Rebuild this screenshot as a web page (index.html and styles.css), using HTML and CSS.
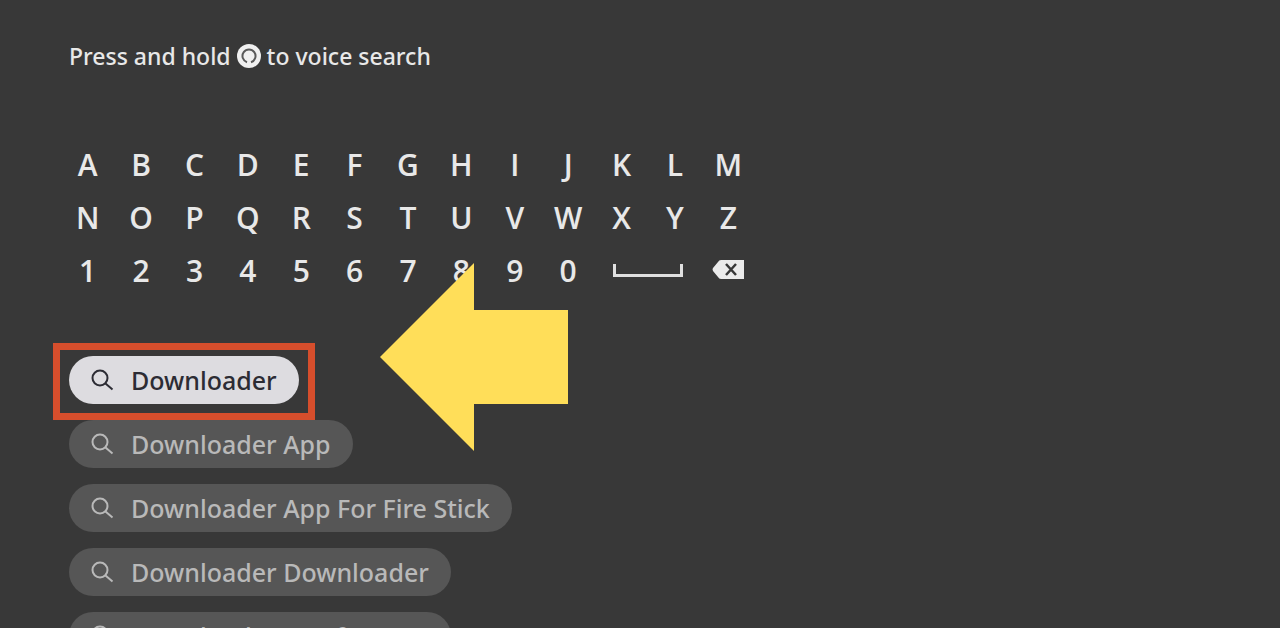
FILE: index.html
```html
<!DOCTYPE html>
<html lang="en">
  <head>
    <meta charset="UTF-8" />
    <meta name="viewport" content="width=device-width, initial-scale=1" />
    <title>Search</title>
    <link rel="stylesheet" href="styles.css">
  </head>
  <body>
    <svg class="sprite" aria-hidden="true">
      <symbol id="search" viewBox="0 0 24 24">
        <circle cx="9" cy="10" r="7.5" />
        <path d="M14.5 15.5L21.5 21.5" />
      </symbol>
    </svg>

    <main class="search">
      <p class="hint">
        Press and hold
        <svg class="mic" viewBox="0 0 24 24" role="img" aria-label="voice button">
          <circle class="mic-fill" cx="12" cy="12" r="12" />
          <path class="mic-ring" d="M10 18.2A6.500 6.500 0 1 1 14 18.200" />
        </svg>
        to voice search
      </p>

      <div class="keyboard">
        <button>A</button>
        <button>B</button>
        <button>C</button>
        <button>D</button>
        <button>E</button>
        <button>F</button>
        <button>G</button>
        <button>H</button>
        <button>I</button>
        <button>J</button>
        <button>K</button>
        <button>L</button>
        <button>M</button>
        <button>N</button>
        <button>O</button>
        <button>P</button>
        <button>Q</button>
        <button>R</button>
        <button>S</button>
        <button>T</button>
        <button>U</button>
        <button>V</button>
        <button>W</button>
        <button>X</button>
        <button>Y</button>
        <button>Z</button>
        <button>1</button>
        <button>2</button>
        <button>3</button>
        <button>4</button>
        <button>5</button>
        <button>6</button>
        <button>7</button>
        <button>8</button>
        <button>9</button>
        <button>0</button>
        <button class="space" aria-label="Space">
          <svg width="70" height="14" viewBox="0 0 70 14">
            <path d="M1.5 0v11.5h67V0" fill="none" stroke="#e0e0e0" stroke-width="3" />
          </svg>
        </button>
        <button aria-label="Backspace">
          <svg width="32" height="22" viewBox="0 0 32 22">
            <path d="M9 0H32V19H9Q7 19 6 17L1 11Q0 9 1 8L6 2Q7 0 9 0z" fill="#ebebeb" />
            <path d="M14 4l10 11M24 4L14 15" stroke="#383838" stroke-width="2.5" />
          </svg>
        </button>
      </div>

      <ul class="suggestions">
        <li>
          <button class="chip selected">
            <svg class="icon"><use href="#search" /></svg>Downloader
          </button>
        </li>
        <li>
          <button class="chip">
            <svg class="icon"><use href="#search" /></svg>Downloader App
          </button>
        </li>
        <li>
          <button class="chip">
            <svg class="icon"><use href="#search" /></svg>Downloader App For Fire Stick
          </button>
        </li>
        <li>
          <button class="chip">
            <svg class="icon"><use href="#search" /></svg>Downloader Downloader
          </button>
        </li>
        <li>
          <button class="chip">
            <svg class="icon"><use href="#search" /></svg>Downloader By Aftvnews
          </button>
        </li>
      </ul>
    </main>

    <svg class="arrow" viewBox="0 0 188 188" aria-hidden="true">
      <path d="M0 94L94 0V47H188V141H94V188z" />
    </svg>
  </body>
</html>
```
FILE: styles.css
```css
:root {
  --bg: #383838;
  --text: #e8e8e8;
  --chip: #565656;
  --chip-text: #b9b9b9;
  --highlight: #d64e2c;
  --arrow: #ffde59;
}

* {
  box-sizing: border-box;
}

body {
  margin: 0;
  height: 100vh;
  overflow: hidden;
  position: relative;
  background: var(--bg);
  color: var(--text);
  font-family: "Noto Sans", "Open Sans", sans-serif;
  font-weight: 500;
}

button {
  border: 0;
  padding: 0;
  background: none;
  color: inherit;
  font: inherit;
}

.sprite {
  display: none;
}

.search {
  padding-top: 40px;
}

.hint {
  display: flex;
  align-items: center;
  gap: 6px;
  margin: 0 0 66px;
  padding-left: 69px;
  font-size: 23px;
  line-height: 32px;
}

.mic {
  width: 24px;
  height: 24px;
}

.mic-fill {
  fill: #f0f0f0;
}

.mic-ring {
  fill: none;
  stroke: #5a5a5a;
  stroke-width: 2;
}

.keyboard {
  display: grid;
  grid-template-columns: repeat(13, 1fr);
  grid-auto-rows: 1fr;
  width: 694px;
  height: 160px;
  margin-left: 61px;
  font-family: "Open Sans", "Noto Sans", sans-serif;
  font-size: 30px;
  font-weight: 600;
}

.keyboard button {
  display: flex;
  align-items: center;
  justify-content: center;
  line-height: 40px;
}

.keyboard .space {
  grid-column: span 2;
}

.suggestions {
  display: flex;
  flex-direction: column;
  gap: 16px;
  margin: 58px 0 0;
  padding-left: 69px;
  list-style: none;
}

.chip {
  display: flex;
  align-items: center;
  gap: 16px;
  position: relative;
  height: 48px;
  padding: 0 22px;
  border-radius: 24px;
  background: var(--chip);
  color: var(--chip-text);
  font-size: 25px;
  white-space: nowrap;
}

.icon {
  width: 24px;
  height: 24px;
  fill: none;
  stroke: currentColor;
  stroke-width: 2;
}

.selected {
  background: #dddce0;
  color: #2c2c34;
}

.selected::after {
  content: "";
  position: absolute;
  inset: -13px -16px -16px;
  border: 7px solid var(--highlight);
}

/* pointer drawn over the screen */
.arrow {
  position: absolute;
  left: 380px;
  top: 263px;
  width: 188px;
  fill: var(--arrow);
}
```
